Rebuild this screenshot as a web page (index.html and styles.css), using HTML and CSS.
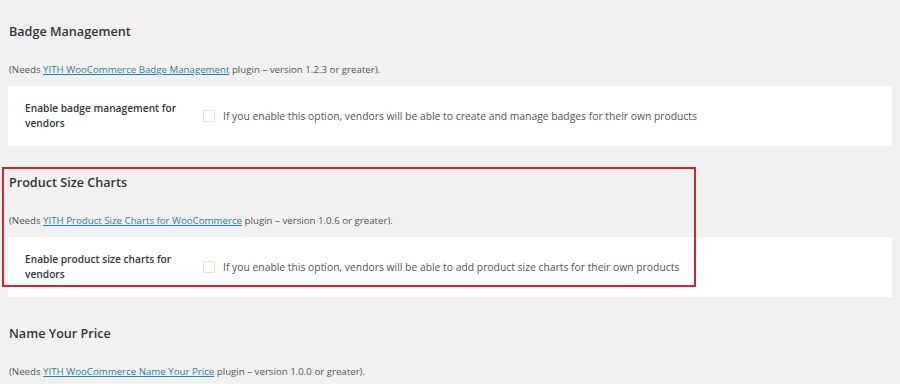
FILE: index.html
```html
<!DOCTYPE html>
<html lang="en">

<head>
    <meta charset="UTF-8">
    <title>Vendor addons</title>
    <link rel="stylesheet" href="styles.css">
</head>

<body>
    <div class="wrap">
        <div class="addon">
            <h2>Badge Management</h2>
            <p class="needs">(Needs <a href="#">YITH WooCommerce Badge Management</a> plugin – version 1.2.3 or greater).</p>
            <div class="option-box">
                <div class="option-label">Enable badge management for vendors</div>
                <label class="option-field">
                    <span class="check"></span>
                    If you enable this option, vendors will be able to create and manage badges for their own products
                </label>
            </div>
        </div>

        <div class="addon highlighted">
            <h2>Product Size Charts</h2>
            <p class="needs">(Needs <a href="#">YITH Product Size Charts for WooCommerce</a> plugin – version 1.0.6 or greater).</p>
            <div class="option-box">
                <div class="option-label">Enable product size charts for vendors</div>
                <label class="option-field">
                    <span class="check"></span>
                    If you enable this option, vendors will be able to add product size charts for their own products
                </label>
            </div>
            <div class="mark"></div>
        </div>

        <div class="addon">
            <h2>Name Your Price</h2>
            <p class="needs">(Needs <a href="#">YITH WooCommerce Name Your Price</a> plugin – version 1.0.0 or greater).</p>
        </div>
    </div>
</body>

</html>
```

FILE: styles.css
```css
body {
    margin: 0;
    background-color: #f1f1f1;
    font-family: 'Open Sans', 'Noto Sans', sans-serif;
    color: #444;
}

.wrap {
    padding: 23px 8px 0 9px;
}

.addon {
    margin-bottom: 28px;
}

.addon:last-child {
    margin-bottom: 0;
}

.addon h2 {
    margin: 0;
    font-size: 12.6px;
    line-height: 18px;
    font-weight: 600;
    color: #32373c;
}

.needs {
    margin: 22px 0 9px;
    font-size: 9.7px;
    line-height: 14px;
    color: #555;
}

.needs a {
    color: #2b7fac;
}

/* option row */
.option-box {
    display: flex;
    align-items: center;
    background: white;
    height: 60px;
    margin-left: -1px;
    padding-left: 17px;
    box-sizing: border-box;
}

.option-label {
    width: 178px;
    font-size: 10.2px;
    line-height: 15px;
    font-weight: 600;
    color: #32373c;
}

.option-field {
    display: flex;
    align-items: center;
    gap: 8px;
    font-size: 10.35px;
    color: #555;
}

.check {
    width: 10px;
    height: 10px;
    border: 1px solid #e3e3e3;
    border-radius: 1px;
    background: white;
}

/* red annotation frame */
.highlighted {
    position: relative;
}

.mark {
    position: absolute;
    top: -7px;
    left: -7px;
    width: 690px;
    height: 116px;
    border: 2px solid #d3242c;
}
```
